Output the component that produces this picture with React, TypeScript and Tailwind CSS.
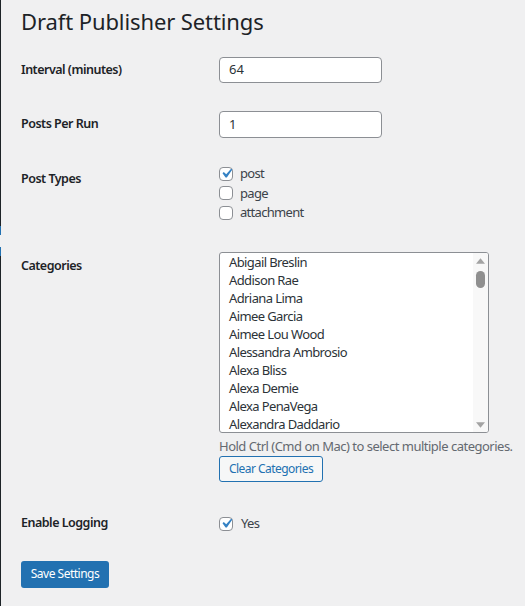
import React from "react";

const categories = [
  "Abigail Breslin",
  "Addison Rae",
  "Adriana Lima",
  "Aimee Garcia",
  "Aimee Lou Wood",
  "Alessandra Ambrosio",
  "Alexa Bliss",
  "Alexa Demie",
  "Alexa PenaVega",
  "Alexandra Daddario",
];

function Check({ checked }: { checked: boolean }) {
  return (
    <span className="flex h-[14px] w-[14px] shrink-0 items-center justify-center rounded-[4px] border border-[#8c8f94] bg-white">
      {checked && (
        <svg viewBox="0 0 20 20" className="h-[19px] w-[19px] shrink-0">
          <path
            d="M14.83 4.89l1.34.94-5.81 8.38H9.02L5.78 9.67l1.34-1.25 2.57 2.4z"
            fill="#3582c4"
          />
        </svg>
      )}
    </span>
  );
}

export default function App() {
  return (
    <div
      className="flex min-h-[606px] w-full bg-[#f0f0f1] text-[13px] tracking-[-0.6px] text-[#3c434a]"
      style={{ fontFamily: '"Noto Sans", "Open Sans", sans-serif' }}
    >
      <div className="flex w-px shrink-0 flex-col bg-[#1d2327]">
        <div className="h-[226px]" />
        <div className="h-[9px] bg-[#2271b1]" />
        <div className="h-[12px] bg-[#f0f0f1]" />
        <div className="h-[9px] bg-[#2271b1]" />
      </div>
      <div className="flex flex-1 flex-col pl-[20px]">
        <h1 className="mt-[5px] h-[32px] text-[22px] leading-[32px] font-normal tracking-[-0.1px] text-[#1d2327]">
          Draft Publisher Settings
        </h1>

        {/* Interval */}
        <div className="mt-[20px] flex h-[26px] items-center">
          <div className="w-[198px] shrink-0 text-[12.5px] font-semibold tracking-[-0.5px] text-[#1d2327]">
            Interval (minutes)
          </div>
          <div className="flex h-[26px] w-[163px] items-center rounded-[4px] border border-[#8c8f94] bg-white px-[9px] tracking-normal text-[#2c3338]">
            64
          </div>
        </div>

        {/* Posts per run */}
        <div className="mt-[28px] flex h-[27px] items-center">
          <div className="w-[198px] shrink-0 text-[12.5px] font-semibold tracking-[-0.5px] text-[#1d2327]">
            Posts Per Run
          </div>
          <div className="flex h-[27px] w-[163px] items-center rounded-[4px] border border-[#8c8f94] bg-white px-[9px] tracking-normal text-[#2c3338]">
            1
          </div>
        </div>

        {/* Post types */}
        <div className="mt-[26px] flex">
          <div className="w-[198px] shrink-0 pt-[5px] text-[12.5px] leading-[20px] font-semibold tracking-[-0.5px] text-[#1d2327]">
            Post Types
          </div>
          <div className="flex flex-col">
            {[
              ["post", true],
              ["page", false],
              ["attachment", false],
            ].map(([label, checked]) => (
              <label key={label as string} className="flex h-[19.5px] items-center gap-[7px]">
                <Check checked={checked as boolean} />
                <span className="leading-[19px] tracking-[-0.7px]">{label as string}</span>
              </label>
            ))}
          </div>
        </div>

        {/* Categories */}
        <div className="mt-[29px] flex">
          <div className="w-[198px] shrink-0 pt-[4px] text-[12.5px] leading-[20px] font-semibold tracking-[-0.5px] text-[#1d2327]">
            Categories
          </div>
          <div className="flex flex-col">
            <div className="flex h-[181px] w-[270px] overflow-hidden rounded-[3px] border border-[#8c8f94] bg-white">
              <div className="flex flex-1 flex-col pl-[9px] text-[#2c3338]">
                {categories.map((c) => (
                  <div key={c} className="h-[18px] shrink-0 leading-[18px] whitespace-nowrap">
                    {c}
                  </div>
                ))}
              </div>
              <div className="flex w-[15px] shrink-0 flex-col items-center bg-[#f8f8f8] pt-[5px] pb-[4px]">
                <svg viewBox="0 0 10 6" className="h-[6px] w-[9px]">
                  <path d="M5 0L10 6H0z" fill="#a3a3a3" />
                </svg>
                <div className="mt-[7px] h-[17px] w-[9px] rounded-full bg-[#8f8f8f]" />
                <div className="flex-1" />
                <svg viewBox="0 0 10 6" className="h-[6px] w-[9px]">
                  <path d="M0 0H10L5 6z" fill="#a3a3a3" />
                </svg>
              </div>
            </div>
            <div className="mt-[4px] leading-[18px] tracking-[-0.5px] whitespace-nowrap text-[#646970]">
              Hold Ctrl (Cmd on Mac) to select multiple categories.
            </div>
            <div className="mt-[1px] flex">
              <button className="flex h-[26px] items-center rounded-[3px] border border-[#2271b1] bg-[#f6f7f7] px-[9px] text-[12px] tracking-[-0.55px] text-[#2271b1]">
                Clear Categories
              </button>
            </div>
          </div>
        </div>

        {/* Logging */}
        <div className="mt-[32px] flex h-[20px] items-center">
          <div className="w-[198px] shrink-0 text-[12.5px] font-semibold tracking-[-0.5px] text-[#1d2327]">
            Enable Logging
          </div>
          <label className="flex items-center gap-[8px]">
            <Check checked />
            <span>Yes</span>
          </label>
        </div>

        <div className="mt-[27px] flex">
          <button className="flex h-[27px] w-[88px] items-center justify-center rounded-[3px] bg-[#2271b1] text-[12px] tracking-[-0.5px] text-white">
            Save Settings
          </button>
        </div>
      </div>
    </div>
  );
}
